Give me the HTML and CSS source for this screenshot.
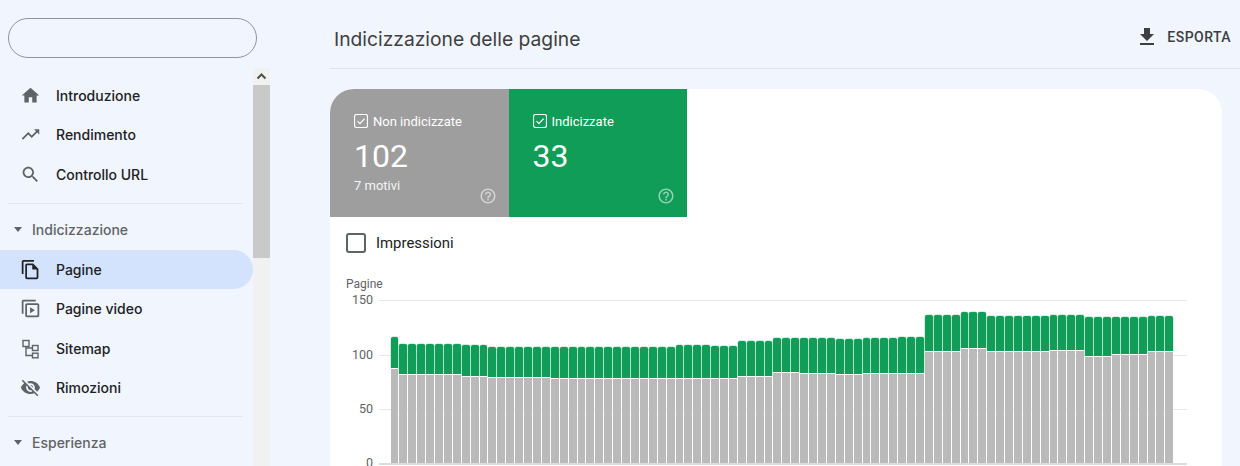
FILE: index.html
```html
<!DOCTYPE html>
<html lang="it">
<head>
<meta charset="utf-8">
<title>Indicizzazione delle pagine</title>
<link rel="stylesheet" href="styles.css">
</head>
<body>
<div class="app">
  <aside class="sidebar">
    <div class="search"></div>
    <div class="side-scroll">
      <nav class="nav">
        <a class="item"><svg class="ico" viewBox="0 0 24 24"><path d="M10 20v-6h4v6h5v-8h3L12 3 2 12h3v8z"/></svg><span>Introduzione</span></a>
        <a class="item"><svg class="ico" viewBox="0 0 24 24"><path d="M16 6l2.29 2.29-4.88 4.88-4-4L2 16.59 3.41 18l6-6 4 4 6.3-6.29L22 12V6z"/></svg><span>Rendimento</span></a>
        <a class="item"><svg class="ico" viewBox="0 0 24 24"><path d="M15.5 14h-.79l-.28-.27C15.41 12.59 16 11.11 16 9.5 16 5.91 13.09 3 9.5 3S3 5.91 3 9.5 5.91 16 9.5 16c1.61 0 3.09-.59 4.23-1.57l.27.28v.79l5 4.99L20.49 19l-4.99-5zm-6 0C7.01 14 5 11.99 5 9.5S7.01 5 9.5 5 14 7.01 14 9.5 11.99 14 9.5 14z"/></svg><span>Controllo URL</span></a>
        <hr class="divider divider-a">
        <div class="section"><i class="caret"></i><span>Indicizzazione</span></div>
        <a class="item active"><svg class="ico" viewBox="0 0 24 24"><path d="M16 1H4c-1.1 0-2 .9-2 2v14h2V3h12V1zm-1 4H8c-1.1 0-1.99.9-1.99 2L6 21c0 1.1.89 2 1.99 2H19c1.1 0 2-.9 2-2V11l-6-6zM8 21V7h6v5h5v9H8z"/></svg><span>Pagine</span></a>
        <a class="item"><svg class="ico" viewBox="0 0 24 24"><path d="M2 4v14h2V4h14V2H4c-1.1 0-2 .9-2 2z"/><path d="M8 6h12c1.1 0 2 .9 2 2v12c0 1.1-.9 2-2 2H8c-1.1 0-2-.9-2-2V8c0-1.100.9-2 2-2zm0 2v12h12V8H8z"/><path d="M11.500 10.500v7l5.500-3.500z"/></svg><span>Pagine video</span></a>
        <a class="item"><svg class="ico ico-line" viewBox="0 0 21 21"><rect x="3" y="2.500" width="6" height="6"/><rect x="12.500" y="7.500" width="5.500" height="5"/><rect x="12.500" y="15.200" width="5.500" height="4.600"/><path d="M6 8.500v9h6.500M6 10h6.500"/></svg><span>Sitemap</span></a>
        <a class="item"><svg class="ico" viewBox="0 0 24 24"><path d="M12 7c2.76 0 5 2.24 5 5 0 .65-.13 1.260-.36 1.830l2.920 2.920c1.510-1.260 2.700-2.890 3.430-4.750-1.730-4.390-6-7.500-11-7.500-1.400 0-2.740.25-3.980.7l2.160 2.160C10.740 7.130 11.350 7 12 7zM2 4.270l2.280 2.280.46.46C3.080 8.300 1.780 10.020 1 12c1.730 4.390 6 7.500 11 7.500 1.550 0 3.030-.3 4.380-.84l.42.42L19.730 22 21 20.730 3.270 3 2 4.270zM7.530 9.800l1.550 1.550c-.05.21-.08.43-.08.65 0 1.660 1.340 3 3 3 .22 0 .44-.03.65-.08l1.550 1.550c-.67.33-1.410.53-2.200.53-2.760 0-5-2.240-5-5 0-.79.2-1.530.53-2.200zm4.310-.78l3.150 3.150.02-.16c0-1.660-1.340-3-3-3l-.17.01z"/></svg><span>Rimozioni</span></a>
        <hr class="divider divider-b">
        <div class="section"><i class="caret"></i><span>Esperienza</span></div>
      </nav>
      <div class="scrollbar">
        <div class="sb-btn"><svg viewBox="0 0 17 17"><path d="M4.500 10.500l4-4 4 4" /></svg></div>
        <div class="sb-thumb"></div>
      </div>
    </div>
  </aside>

  <main class="main">
    <header class="topbar">
      <h1 class="title">Indicizzazione delle pagine</h1>
      <a class="export"><svg class="export-ico" viewBox="0 0 24 24"><path d="M19 9h-4V3H9v6H5l7 7 7-7zM5 18v2h14v-2H5z"/></svg><span>ESPORTA</span></a>
    </header>

    <section class="card">
      <div class="tiles">
        <div class="tile tile-gray">
          <div class="tile-label"><svg class="check" viewBox="0 0 14 14"><rect x=".5" y=".5" width="13" height="13" rx="2"/><path d="M3.500 7.200l2.400 2.400 4.700-5"/></svg><span>Non indicizzate</span></div>
          <div class="tile-num">102</div>
          <div class="tile-sub">7 motivi</div>
          <svg class="help" viewBox="0 0 24 24"><path d="M11 18h2v-2h-2v2zm1-16C6.480 2 2 6.480 2 12s4.480 10 10 10 10-4.480 10-10S17.520 2 12 2zm0 18c-4.410 0-8-3.590-8-8s3.590-8 8-8 8 3.590 8 8-3.590 8-8 8zm0-14c-2.210 0-4 1.790-4 4h2c0-1.100.9-2 2-2s2 .9 2 2c0 2-3 1.750-3 5h2c0-2.250 3-2.500 3-5 0-2.210-1.790-4-4-4z"/></svg>
        </div>
        <div class="tile tile-green">
          <div class="tile-label"><svg class="check" viewBox="0 0 14 14"><rect x=".5" y=".5" width="13" height="13" rx="2"/><path d="M3.500 7.200l2.400 2.400 4.700-5"/></svg><span>Indicizzate</span></div>
          <div class="tile-num">33</div>
          <svg class="help" viewBox="0 0 24 24"><path d="M11 18h2v-2h-2v2zm1-16C6.480 2 2 6.480 2 12s4.480 10 10 10 10-4.480 10-10S17.520 2 12 2zm0 18c-4.410 0-8-3.590-8-8s3.590-8 8-8 8 3.590 8 8-3.590 8-8 8zm0-14c-2.210 0-4 1.790-4 4h2c0-1.100.9-2 2-2s2 .9 2 2c0 2-3 1.750-3 5h2c0-2.250 3-2.500 3-5 0-2.210-1.790-4-4-4z"/></svg>
        </div>
      </div>

      <label class="toggle"><i class="box"></i><span>Impressioni</span></label>

      <div class="chart">
        <div class="y-title">Pagine</div>
        <div class="plot">
          <div class="rows">
            <div class="row"><span class="tick">150</span><i class="line"></i></div>
            <div class="row"><span class="tick">100</span><i class="line"></i></div>
            <div class="row"><span class="tick">50</span><i class="line"></i></div>
            <div class="row row-zero"><span class="tick">0</span><i class="line"></i></div>
          </div>
          <div class="bars" id="bars"></div>
        </div>
      </div>
    </section>
  </main>
</div>
<script src="chart.js"></script>
</body>
</html>
```

FILE: styles.css
```css
* { box-sizing: border-box; }
html, body { margin: 0; height: 466px; overflow: hidden; }
body { background: #f1f5fd; font-family: Roboto, "Liberation Sans", sans-serif; color: #202124; }

.app { display: flex; height: 466px; overflow: hidden; }

/* Sidebar */
.sidebar { width: 330px; flex: none; padding-top: 18px; }
.search { width: 249px; height: 40px; margin-left: 8px; border: 1px solid #909399; border-radius: 20px; }
.side-scroll { display: flex; width: 270px; margin-top: 10px; height: 398px; }
.nav { width: 253px; flex: none; padding-top: 7.500px; display: flex; flex-direction: column; font-family: Inter, Roboto, sans-serif; }
.item { display: flex; align-items: center; height: 39.500px; flex: none; padding-left: 20px; border-radius: 0 20px 20px 0; font-size: 14px; font-weight: 500; color: #202124; }
.item .ico { width: 21px; height: 21px; flex: none; margin-right: 15px; fill: #5f6368; }
.item .ico-line { fill: none; stroke: #5f6368; stroke-width: 1.400; }
.item.active { background: #d3e3fd; }
.item.active .ico { fill: #202124; }
.divider { border: 0; border-top: 1px solid #e3e6ec; margin: 0 10px 0 8px; height: 1px; flex: none; }
.divider-a { margin-top: 8.500px; }
.divider-b { margin-top: 8px; }
.section { display: flex; align-items: center; height: 46px; padding: 5px 0 0 14px; font-size: 14px; font-weight: 500; color: #5f6368; flex: none; }
.caret { width: 0; height: 0; border: 4px solid transparent; border-top: 5px solid #5f6368; border-bottom: 0; margin-right: 10px; }
.scrollbar { width: 17px; flex: none; background: #f1f1f1; }
.sb-btn { height: 17px; }
.sb-btn svg { display: block; width: 17px; height: 17px; fill: none; stroke: #505050; stroke-width: 2; }
.sb-thumb { height: 173px; background: #c9c9c9; }

/* Main */
.main { flex: 1; min-width: 0; display: flex; flex-direction: column; }
.topbar { flex: none; height: 69px; display: flex; align-items: center; justify-content: space-between; padding: 6px 9px 0 4px; border-bottom: 1px solid #dfe2e8; }
.title { margin: 4px 0 0; font-family: Inter, Roboto, sans-serif; font-size: 19.250px; font-weight: 400; color: #3c4043; }
.export { display: flex; align-items: center; gap: 8px; font-size: 14px; font-weight: 500; letter-spacing: .45px; color: #3c4043; }
.export-ico { width: 24px; height: 24px; fill: #3c4043; }

.card { flex: none; width: 892px; height: 420px; margin-top: 20px; background: #fff; border-radius: 24px 24px 0 0; overflow: hidden; }
.tiles { display: flex; height: 128px; }
.tile { width: 178.500px; padding: 24px 0 0 24px; color: #fff; display: flex; flex-direction: column; position: relative; }
.tile-gray { background: #9e9e9e; }
.tile-green { background: #0f9d58; }
.tile-label { display: flex; align-items: center; gap: 5px; font-size: 13px; height: 16px; }
.check { width: 14px; height: 14px; fill: none; stroke: #fff; stroke-width: 1.200; }
.tile-num { font-size: 32px; line-height: 38px; margin-top: 8px; }
.tile-sub { font-size: 13px; line-height: 16px; margin-top: 3px; opacity: .9; }
.help { position: absolute; right: 12px; bottom: 12px; width: 18px; height: 18px; fill: #fff; opacity: .55; }

.toggle { display: flex; align-items: center; gap: 10px; margin: 16px 0 0 16px; height: 20px; font-size: 14.900px; color: #202124; }
.box { width: 20px; height: 20px; border: 2px solid #5f6368; border-radius: 3px; }

.chart { padding-left: 16px; margin-top: 24px; }
.y-title { font-size: 12px; line-height: 14px; color: #5f6368; }
.plot { display: grid; width: 841px; height: 172px; margin-top: 9.300px; align-items: start; }
.rows, .bars { grid-area: 1 / 1; }
.rows { display: flex; flex-direction: column; }
.row { display: flex; align-items: flex-start; height: 54.350px; flex: none; }
.tick { width: 27px; text-align: right; font-size: 12.500px; color: #5f6368; line-height: 12px; margin: -6px 6px 0 0; }
.line { flex: 1; height: 1px; background: #e8e8e8; }
.row-zero .line { height: 2px; background: #dcdcdc; }
.bars { display: flex; align-items: flex-end; gap: 1px; margin-left: 44.500px; margin-right: 14px; height: 163.200px; }
.bar { flex: 1; min-width: 0; display: flex; flex-direction: column; }
.bar-green { background: #0f9d58; border-radius: 2px 2px 0 0; box-shadow: 0 0 0 .5px rgba(15, 157, 88, .35); }
.bar-gray { background: #bababa; border-top: 1px solid #fff; }
```

FILE: chart.js
```js
// [bars in run, total, not indexed]
var runs = [[1,116,88],[7,110,82],[3,109,80],[7,107,79],[14,107,78],[4,109,78],[3,108,78],[4,112,80],[3,115,84],[4,115,83],[3,114,82],[4,115,83],[3,116,83],[4,136,103],[3,139,106],[7,135,103],[4,136,104],[3,134,99],[4,134,100],[3,135,103]];
var scale = 1.09;
var host = document.getElementById('bars');
runs.forEach(function (r) {
  for (var i = 0; i < r[0]; i++) {
    var bar = document.createElement('div');
    bar.className = 'bar';
    var green = document.createElement('div');
    green.className = 'bar-green';
    green.style.height = ((r[1] - r[2]) * scale) + 'px';
    var gray = document.createElement('div');
    gray.className = 'bar-gray';
    gray.style.height = (r[2] * scale) + 'px';
    bar.appendChild(green);
    bar.appendChild(gray);
    host.appendChild(bar);
  }
});
```
